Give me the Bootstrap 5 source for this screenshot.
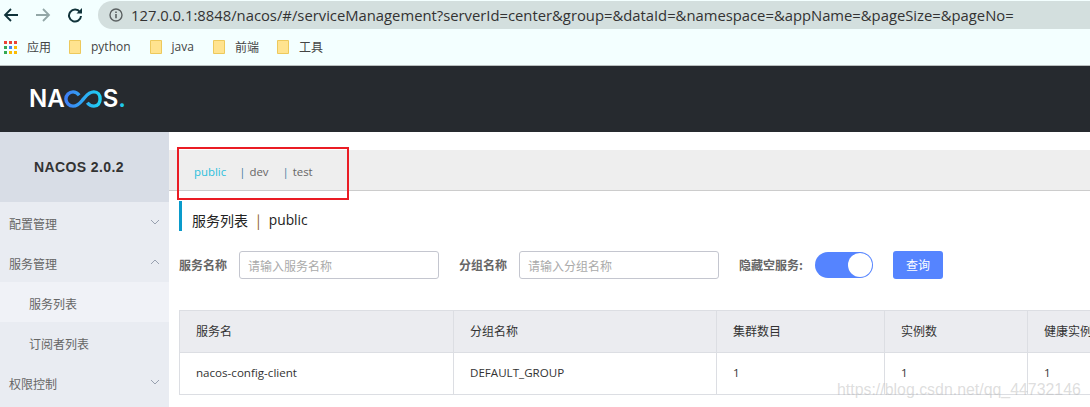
<!DOCTYPE html>
<html lang="zh">
<head>
<meta charset="utf-8">
<title>Nacos</title>
<link rel="stylesheet" href="https://cdn.jsdelivr.net/npm/bootstrap@5.3.0/dist/css/bootstrap.min.css">
<style>
html,body{height:407px;overflow:hidden}
body{font-family:"Liberation Sans","Noto Sans CJK SC",sans-serif;font-size:12px;color:#333;background:#fff;position:relative}
.tool-bar{height:29px;background:#f3ffff;padding-left:3px}
.tool-ic{flex:none}
.tool-fwd{margin-left:16px}
.tool-reload{margin-left:16px}
.addr-pill{margin-left:15px;flex:1;height:28px;margin-top:1px;background:#d3dfde;border-radius:14px 0 0 14px;padding-left:11px;gap:8px;font-family:"Open Sans","Liberation Sans",sans-serif;font-size:14.8px;color:#333;white-space:nowrap;overflow:hidden}
.mark-row{height:37px;background:#f3ffff;border-bottom:1px solid #b9bfbf;padding-left:4px;font-family:"Noto Sans CJK SC",sans-serif;font-size:12px;color:#444}
.mark-item{gap:10px}
.mark-item svg{flex:none}
.mark-python{margin-left:18px}.mark-java{margin-left:19px}.mark-fe{margin-left:19px}.mark-tool{margin-left:18px}
.mark-latin{font-family:"Open Sans",sans-serif}
.top-head{height:66px;background:#262a2f;padding:21px 0 0 29px}
.logo-text{font-family:"Inter","Liberation Sans",sans-serif;font-weight:600;font-size:24px;line-height:24px;color:#fff}
.logo-dot{color:#1fc8e8}
.logo-loop{margin:0 1px 0 -1px;flex:none}
.frame-row{height:275px}
.side-col{width:169px;flex:none;background:#e9ecf2;font-family:"Noto Sans CJK SC",sans-serif;color:#666}
.side-title{height:70px;background:#d8dde6;padding-right:11px;font-family:"Liberation Sans",sans-serif;font-weight:700;font-size:14px;color:#333;letter-spacing:.4px}
.side-item{height:40px;padding:8px 9px 4px;font-size:12px}
.side-item svg{margin-bottom:4px}
.side-sub{padding-left:29px}
.side-on{background:#f0f2f7}
.main-col{flex:1;min-width:0;padding-top:18px;overflow:hidden}
.ns-strip{height:41px;background:#eee;border-bottom:1px solid #ccc;padding:3px 0 0 25px;font-family:"Open Sans",sans-serif;font-size:11.4px;color:#666}
.ns-on{color:#2cc0dc;margin-right:13px}
.ns-sep{color:#4a7fa0;margin-right:4px}
.ns-dev{margin-right:14px}
.page-title{margin:10px 0 0 10px;height:30px;border-left:3px solid #0a9bcb;padding:8px 0 0 10px;font-family:"Noto Sans CJK SC",sans-serif;font-size:14px;color:#222}
.title-sep{color:#8a5a20;margin:0 8.500px}
.title-latin{font-family:"Open Sans",sans-serif;font-size:13.800px}
.query-form{margin:20px 0 0 10px;font-family:"Noto Sans CJK SC",sans-serif;font-size:12px}
.query-label{font-weight:700;color:#666;white-space:nowrap}
.query-input{width:200px;height:28px;margin-left:12px;margin-right:20px;padding:0 8px;font-size:12px;color:#333;border:1px solid #c4c6cf;border-radius:3px}
.query-input::placeholder{color:#aaa}
.query-switch{width:58px;height:26px;border-radius:13px;background:#5584ff;margin:0 20px 0 12px;padding:1px;justify-content:flex-end;flex:none}
.query-knob{width:24px;height:24px;border-radius:50%;background:#fff}
.query-btn{width:50px;height:28px;padding:0;font-size:12px;color:#fff;background:#5584ff;border:0;border-radius:3px}
.svc-table{margin:31px 0 0 10px;width:960px;table-layout:fixed;border-color:#dcdee3;font-family:"Noto Sans CJK SC",sans-serif;font-size:12px}
.svc-table th{height:42px;background:#ebecf0;font-weight:400;color:#333;padding:0 16px 2px;vertical-align:middle;white-space:nowrap;overflow:hidden}
.svc-table td{height:42px;padding:0 16px 1px;color:#333;vertical-align:middle;font-family:"Open Sans",sans-serif;font-size:11.600px}
.red-frame{position:absolute;left:177px;top:147px;width:172px;height:53px;border:2px solid #ea1c24;pointer-events:none}
.water-mark{position:absolute;left:837px;top:378px;font-family:"Liberation Sans",sans-serif;font-size:15.900px;color:rgba(170,170,170,.4);white-space:nowrap}
</style>
</head>
<body>
<div class="tool-bar d-flex align-items-center">
  <svg class="tool-ic" width="16" height="16" viewBox="0 0 16 16"><path d="M15 8H2M8 2 2 8l6 6" fill="none" stroke="#10333a" stroke-width="1.8"/></svg>
  <svg class="tool-ic tool-fwd" width="16" height="16" viewBox="0 0 16 16"><path d="M1 8H14M8 2l6 6-6 6" fill="none" stroke="#93a7a7" stroke-width="1.8"/></svg>
  <svg class="tool-ic tool-reload" width="16" height="16" viewBox="0 0 16 16"><path d="M13 5.200A6 6 0 1 0 14 9" fill="none" stroke="#10333a" stroke-width="2"/><path d="M9.500 6.500H15V1z" fill="#10333a"/></svg>
  <div class="addr-pill d-flex align-items-center">
    <svg class="tool-ic" width="14" height="14" viewBox="0 0 14 14"><circle cx="7" cy="7" r="6" fill="none" stroke="#5b6162" stroke-width="1.4"/><path d="M7 6v4.200M7 3.400v1.500" stroke="#5b6162" stroke-width="1.600"/></svg>
    <span>127.0.0.1:8848/nacos/#/serviceManagement?serverId=center&amp;group=&amp;dataId=&amp;namespace=&amp;appName=&amp;pageSize=&amp;pageNo=</span>
  </div>
</div>
<div class="mark-row d-flex align-items-center">
  <div class="mark-item d-flex align-items-center">
    <svg width="13" height="13" viewBox="0 0 13 13"><g><rect width="3" height="3" fill="#ea4335"/><rect x="5" width="3" height="3" fill="#ea4335"/><rect x="10" width="3" height="3" fill="#ea4335"/><rect y="5" width="3" height="3" fill="#34a853"/><rect x="5" y="5" width="3" height="3" fill="#4285f4"/><rect x="10" y="5" width="3" height="3" fill="#fbbc05"/><rect y="10" width="3" height="3" fill="#34a853"/><rect x="5" y="10" width="3" height="3" fill="#fbbc05"/><rect x="10" y="10" width="3" height="3" fill="#fbbc05"/></g></svg>
    <span>应用</span>
  </div>
  <div class="mark-item mark-python d-flex align-items-center">
    <svg width="12" height="14" viewBox="0 0 12 14"><path d="M.5.5h11v13H.5z" fill="#ffe38f" stroke="#edc95c"/></svg>
    <span class="mark-latin">python</span>
  </div>
  <div class="mark-item mark-java d-flex align-items-center">
    <svg width="12" height="14" viewBox="0 0 12 14"><path d="M.5.5h11v13H.5z" fill="#ffe38f" stroke="#edc95c"/></svg>
    <span class="mark-latin">java</span>
  </div>
  <div class="mark-item mark-fe d-flex align-items-center">
    <svg width="12" height="14" viewBox="0 0 12 14"><path d="M.5.5h11v13H.5z" fill="#ffe38f" stroke="#edc95c"/></svg>
    <span>前端</span>
  </div>
  <div class="mark-item mark-tool d-flex align-items-center">
    <svg width="12" height="14" viewBox="0 0 12 14"><path d="M.5.5h11v13H.5z" fill="#ffe38f" stroke="#edc95c"/></svg>
    <span>工具</span>
  </div>
</div>
<div class="top-head">
  <div class="logo-text d-flex align-items-center">NA<svg class="logo-loop" width="38" height="20" viewBox="0 0 40 20"><defs><linearGradient id="lg" x1="0" x2="1"><stop offset="0" stop-color="#3f7ff5"/><stop offset="1" stop-color="#1fd0f2"/></linearGradient></defs><path d="M16 6C14 3.500 12 2.500 9.500 2.500 5.500 2.500 2 5.800 2 10s3.500 7.500 7.500 7.500c6 0 9-5.500 11-7.500s5-7.500 11-7.500c4 0 6.500 3.300 6.500 7.500s-2.500 7.500-6.500 7.500c-3 0-5-1-7-3.500" fill="none" stroke="url(#lg)" stroke-width="3.600"/></svg>S<span class="logo-dot">.</span></div>
</div>
<div class="frame-row d-flex">
  <aside class="side-col">
    <div class="side-title d-flex align-items-center justify-content-center">NACOS 2.0.2</div>
    <div class="side-item d-flex align-items-center justify-content-between"><span>配置管理</span><svg width="10" height="6" viewBox="0 0 10 6"><path d="M1 1l4 4 4-4" fill="none" stroke="#98a1b0"/></svg></div>
    <div class="side-item d-flex align-items-center justify-content-between"><span>服务管理</span><svg width="10" height="6" viewBox="0 0 10 6"><path d="M1 5l4-4 4 4" fill="none" stroke="#98a1b0"/></svg></div>
    <div class="side-item side-sub side-on d-flex align-items-center">服务列表</div>
    <div class="side-item side-sub d-flex align-items-center">订阅者列表</div>
    <div class="side-item d-flex align-items-center justify-content-between"><span>权限控制</span><svg width="10" height="6" viewBox="0 0 10 6"><path d="M1 1l4 4 4-4" fill="none" stroke="#98a1b0"/></svg></div>
  </aside>
  <main class="main-col">
    <div class="ns-strip d-flex align-items-center"><span class="ns-on">public</span><span class="ns-sep">|</span><span class="ns-dev">dev</span><span class="ns-sep">|</span><span>test</span></div>
    <div class="page-title d-flex align-items-center"><span>服务列表</span><span class="title-sep">|</span><span class="title-latin">public</span></div>
    <form class="query-form d-flex align-items-center">
      <label class="query-label">服务名称</label><input class="form-control query-input" placeholder="请输入服务名称">
      <label class="query-label">分组名称</label><input class="form-control query-input" placeholder="请输入分组名称">
      <label class="query-label">隐藏空服务:</label>
      <div class="query-switch d-flex"><div class="query-knob"></div></div>
      <button type="button" class="btn query-btn">查询</button>
    </form>
    <table class="table table-bordered svc-table">
      <colgroup><col style="width:274px"><col style="width:263px"><col style="width:168px"><col style="width:143px"><col style="width:112px"></colgroup>
      <thead><tr><th>服务名</th><th>分组名称</th><th>集群数目</th><th>实例数</th><th>健康实例数</th></tr></thead>
      <tbody><tr><td>nacos-config-client</td><td>DEFAULT_GROUP</td><td>1</td><td>1</td><td>1</td></tr></tbody>
    </table>
  </main>
</div>
<div class="red-frame"></div>
<div class="water-mark">https://blog.csdn.net/qq_44732146</div>
<script src="https://cdn.jsdelivr.net/npm/bootstrap@5.3.0/dist/js/bootstrap.bundle.min.js"></script>
</body>
</html>
